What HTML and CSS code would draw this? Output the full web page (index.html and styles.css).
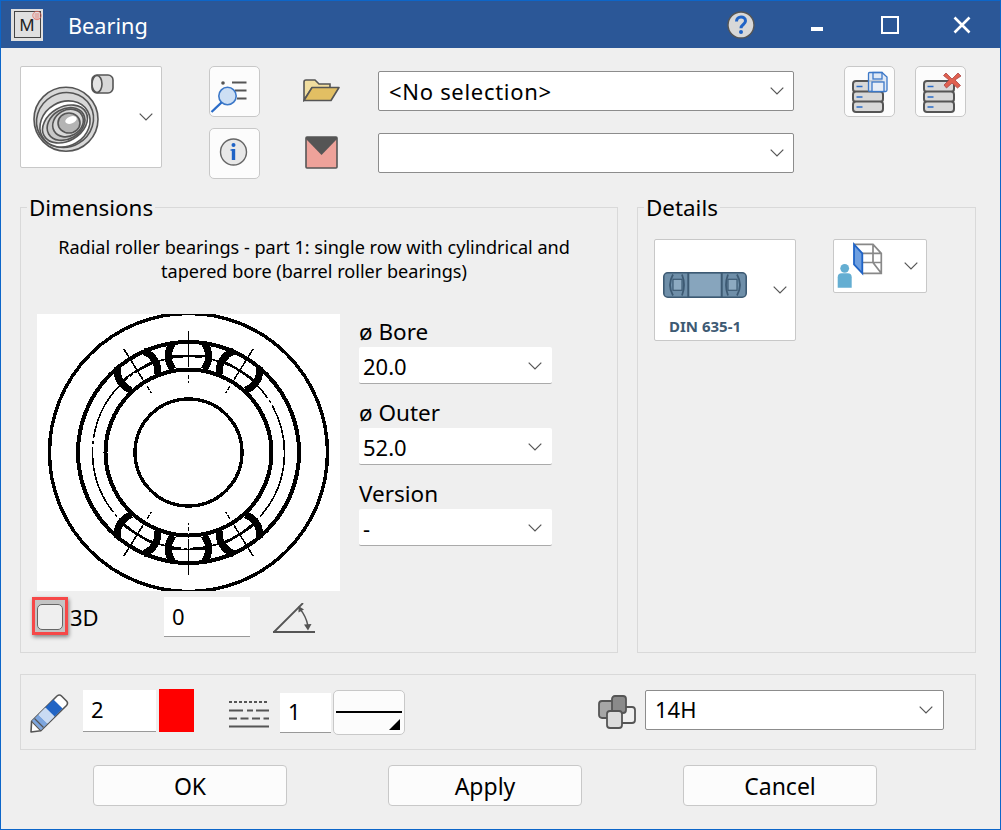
FILE: index.html
```html
<!DOCTYPE html>
<html lang="en">
<head>
<meta charset="utf-8">
<title>Bearing</title>
<link rel="stylesheet" href="styles.css">
</head>
<body>
<svg class="defs" width="0" height="0" aria-hidden="true">
  <defs>
    <symbol id="chev" viewBox="0 0 14 8"><path d="M.7.7 7 7 13.3.7" fill="none" stroke="#555" stroke-width="1.2"/></symbol>
    <symbol id="dbstack" viewBox="0 0 33 33">
      <g fill="#d8d8d8" stroke="#555" stroke-width="2">
        <rect x="1" y="1" width="30" height="11" rx="3"/>
        <rect x="1" y="11.500" width="30" height="10.500" rx="3"/>
        <rect x="1" y="21.500" width="30" height="10.500" rx="3"/>
      </g>
      <path d="M4.500 6.500h6M4.500 17h6M4.500 27h6" stroke="#2a6cc8" stroke-width="1.600"/>
    </symbol>
    <g id="roller" fill="none" stroke="#000">
      <path d="M-15.500-110Q-25-96-15.500-83M15.500-110Q25-96 15.500-83" stroke-width="7"/>
      <path d="M0-122V-86M0-84V-81M0-78V-74M0-72V-70" stroke-width="1.500"/>
      <path d="M-20-96Q0-98 20-96" stroke-width="1.500"/>
    </g>
  </defs>
</svg>
<div class="window">
  <header class="titlebar">
    <div class="app-icon"><span class="app-m">M</span><svg class="app-badge" width="10" height="11" viewBox="0 0 10 11"><circle cx="5" cy="5.500" r="4.200" fill="none" stroke="#e56b60" stroke-width=".8"/><path d="M2.500 4h5M2.500 6h5M2.500 8h5" stroke="#e56b60" stroke-width=".8"/></svg></div>
    <h1 class="title">Bearing</h1>
    <svg class="help" width="28" height="28" viewBox="0 0 28 28"><circle cx="14" cy="14" r="13" fill="#d8d8d8" stroke="#555" stroke-width="1.400"/><path d="M9.500 10.500C9.500 4.500 18.500 4.500 18.500 10C18.500 13.500 14 13.500 14 17.200" fill="none" stroke="#1f63c6" stroke-width="3"/><circle cx="14" cy="21" r="2" fill="#1f63c6"/></svg>
    <span class="win-min"></span>
    <span class="win-max"></span>
    <svg class="win-close" width="18" height="18" viewBox="0 0 18 18"><path d="M1.500 1.500 16.500 16.500M16.500 1.500 1.500 16.500" stroke="#fff" stroke-width="2.600"/></svg>
  </header>

  <main class="content">
    <section class="toolbar">
      <button class="bearing-pick">
        <svg width="90" height="90" viewBox="0 0 90 90">
          <g stroke="#555" stroke-width="1.600" fill="#d8d8d8">
            <rect x="60" y="1" width="21" height="18" rx="5"/>
            <ellipse cx="65" cy="10" rx="5" ry="8.500" fill="#e4e4e4"/>
            <circle cx="34" cy="45.300" r="32"/>
            <ellipse cx="33" cy="46" rx="29" ry="27" transform="rotate(-30 33 46)"/>
            <ellipse cx="33" cy="50" rx="26" ry="22" transform="rotate(-30 33 50)" fill="#fff"/>
            <ellipse cx="33" cy="50" rx="24" ry="17" transform="rotate(-30 33 50)"/>
            <ellipse cx="34" cy="50" rx="20" ry="15" transform="rotate(-30 34 50)" fill="#c8c8c8"/>
            <ellipse cx="36" cy="49" rx="16" ry="13" transform="rotate(-30 36 49)"/>
            <ellipse cx="37" cy="49" rx="11" ry="10" fill="#b4b4b4"/>
            <ellipse cx="39" cy="46" rx="6" ry="3.500" transform="rotate(-20 39 46)" fill="#fff" stroke="none"/>
          </g>
        </svg>
        <svg class="chev pick-chev" width="14" height="8"><use href="#chev"/></svg>
      </button>

      <div class="tool-col">
        <button class="icon-btn">
          <svg width="51" height="51" viewBox="0 0 51 51"><circle cx="14" cy="17" r="1.800" fill="#555"/><path d="M23 16.500H37.500M26 24.500H37.500M28 32.500H37.500" stroke="#555" stroke-width="2"/><circle cx="18.500" cy="30" r="8.700" fill="#cddff4" stroke="#3c78c8" stroke-width="1.600"/><path d="M12.500 36.500 2.500 46" stroke="#2a6cc8" stroke-width="2.400"/></svg>
        </button>
        <button class="icon-btn">
          <svg width="51" height="51" viewBox="0 0 51 51"><circle cx="24.500" cy="24" r="13" fill="#e8e8e8" stroke="#666" stroke-width="1.400"/><circle cx="24.500" cy="17" r="2" fill="#1f63c6"/><path d="M24.500 21V32" stroke="#1f63c6" stroke-width="3.400"/><path d="M21.500 22H25" stroke="#1f63c6" stroke-width="1.400"/></svg>
        </button>
      </div>

      <div class="marker-col">
        <svg width="37" height="23" viewBox="0 0 37 23"><path d="M1 21V3Q1 1 3 1H12L16 5H27V9H9L1 21Z" fill="#f0dd9f" stroke="#555" stroke-width="1.600"/><path d="M1 21.500 9 8.500H36L28 21.500Z" fill="#e2bf63" stroke="#555" stroke-width="1.600" stroke-linejoin="round"/></svg>
        <svg width="33" height="33" viewBox="0 0 33 33"><rect x="1" y="1" width="31" height="31" fill="#eea29a" stroke="#555" stroke-width="1.600" rx="1"/><path d="M1 1H32V3L16.500 19 1 3Z" fill="#555"/></svg>
      </div>

      <div class="combo-col">
        <div class="combo combo-main"><span>&lt;No selection&gt;</span><svg class="chev" width="14" height="8"><use href="#chev"/></svg></div>
        <div class="combo combo-main"><span></span><svg class="chev" width="14" height="8"><use href="#chev"/></svg></div>
      </div>

      <button class="icon-btn db-btn">
        <svg class="db-icon" width="51" height="51" viewBox="0 0 51 51"><use href="#dbstack" x="8" y="14" width="33" height="33"/><path d="M24.500 7.500Q24.500 6.500 25.500 6.500H38L43 11V24Q43 25.500 41.500 25.500H25.500Q24.500 25.500 24.500 24Z" fill="#d8e3f2" fill-opacity=".8" stroke="#3c78c8" stroke-width="1.300"/><rect x="29" y="6.500" width="9" height="6.500" fill="none" stroke="#3c78c8" stroke-width="1.300"/><rect x="28" y="16" width="12" height="9.500" fill="#e8eef7" stroke="#3c78c8" stroke-width="1.300"/></svg>
      </button>
      <button class="icon-btn">
        <svg width="51" height="51" viewBox="0 0 51 51"><use href="#dbstack" x="8" y="14" width="33" height="33"/><path d="M31 7 37 13 43 7 46 10 40 14 45.500 19.500 42.500 22 37 17 31.500 22 29 19 34 14 28.500 9.500Z" fill="#e0604f" stroke="#a44" stroke-width=".8"/></svg>
      </button>
    </section>

    <section class="panels">
      <fieldset class="panel panel-dim">
        <legend>Dimensions</legend>
        <p class="desc">Radial roller bearings - part 1: single row with cylindrical and<br>tapered bore (barrel roller bearings)</p>
        <div class="dim-main">
          <svg class="drawing" width="303" height="277" viewBox="0 0 303 277" shape-rendering="crispEdges">
            <rect width="303" height="277" fill="#fff"/>
            <g transform="translate(151.500 138.500)" fill="none" stroke="#000">
              <circle r="139" stroke-width="3.400"/>
              <circle r="110.500" stroke-width="4"/>
              <circle r="83" stroke-width="4"/>
              <circle r="53.500" stroke-width="3.400"/>
              <circle r="96" stroke-width="1.600" stroke-dasharray="70 3 3 3"/>
              <use href="#roller"/>
              <use href="#roller" transform="rotate(32)"/>
              <use href="#roller" transform="rotate(-32)"/>
              <use href="#roller" transform="rotate(180)"/>
              <use href="#roller" transform="rotate(148)"/>
              <use href="#roller" transform="rotate(-148)"/>
            </g>
          </svg>
          <div class="fields">
            <label class="field-label">ø Bore</label>
            <div class="combo combo-small"><span>20.0</span><svg class="chev" width="14" height="8"><use href="#chev"/></svg></div>
            <label class="field-label">ø Outer</label>
            <div class="combo combo-small"><span>52.0</span><svg class="chev" width="14" height="8"><use href="#chev"/></svg></div>
            <label class="field-label">Version</label>
            <div class="combo combo-small"><span>-</span><svg class="chev" width="14" height="8"><use href="#chev"/></svg></div>
          </div>
        </div>
        <div class="row-3d">
          <div class="check-hl"><span class="check"></span></div>
          <span class="label-3d">3D</span>
          <div class="input input-angle">0</div>
          <svg class="angle-icon" width="42" height="30" viewBox="0 0 42 30"><path d="M0 29H42M1 29 30 0" fill="none" stroke="#555" stroke-width="1.800"/><path d="M27 6Q33 13 35 23" fill="none" stroke="#555" stroke-width="1.400"/><path d="M25.500 3 31 6.500 25.500 9.500ZM35 27.500 31 21.500 38.500 21Z" fill="#555"/></svg>
        </div>
      </fieldset>

      <fieldset class="panel panel-details">
        <legend>Details</legend>
        <div class="details-row">
          <button class="din-btn">
            <svg width="84" height="26" viewBox="0 0 84 26"><rect x=".8" y=".8" width="82.400" height="24.400" rx="4" fill="#6f8fa9" stroke="#3d5a73" stroke-width="1.600"/><rect x="25" y="2" width="34" height="22" fill="#87a5bd"/><path d="M25.300 1V25M58.700 1V25" stroke="#3d5a73" stroke-width="2"/><rect x="10" y="7.300" width="9" height="11" fill="#8daac1" stroke="#3d5a73" stroke-width="1.200"/><rect x="65" y="7.300" width="9" height="11" fill="#8daac1" stroke="#3d5a73" stroke-width="1.200"/><path d="M10 2.500Q4 13 10 23.500M19 2.500Q23 13 19 23.500M65 2.500Q61 13 65 23.500M74 2.500Q80 13 74 23.500" fill="none" stroke="#3d5a73" stroke-width="1.800"/></svg>
            <svg class="chev din-chev" width="14" height="8"><use href="#chev"/></svg>
            <span class="din-label">DIN 635-1</span>
          </button>
          <button class="view-btn">
            <svg width="70" height="52" viewBox="0 0 70 52"><circle cx="10.700" cy="28.300" r="4.400" fill="#64aed2"/><path d="M3.700 47.700V37.300Q3.700 33.300 7.700 33.300H13.700Q17.700 33.300 17.700 37.300V47.700Z" fill="#64aed2"/><path d="M20 4.300H39L47.300 13.300V33.300H28.300M28.300 13.300H47.300M39 4.300V22.500M28.300 22.500H47.300L39 22.500 47.300 33.300" fill="none" stroke="#888" stroke-width="1.700"/><path d="M20 4.300 28.300 13.300V33.300L20 24.300Z" fill="#6e9fe0" stroke="#1f63c6" stroke-width="1.800"/></svg>
            <svg class="chev" width="14" height="8"><use href="#chev"/></svg>
          </button>
        </div>
      </fieldset>
    </section>

    <section class="props">
      <svg class="pencil" width="40" height="40" viewBox="0 0 40 40"><path d="M1 39 1.600 28.400 27 3Q29.500 1 31.500 3L36.500 8Q38.500 10 36.500 12.500L10.800 37.800Z" fill="#fff" stroke="#555" stroke-width="1.600" stroke-linejoin="round"/><path d="M1.800 28 8.400 21.400 17.600 30.600 10.800 37.200Z" fill="#7ca5de"/><path d="M8.400 21.400 15.400 14.400 24.600 23.600 17.600 30.600Z" fill="#c9dbf3"/><path d="M15.400 14.400 23.400 6.400 32.600 15.600 24.600 23.600Z" fill="#2164c4"/><path d="M1.600 28.400 10.800 37.800M4.500 25.500 13.500 34.500" stroke="#555" stroke-width="1.200"/></svg>
      <div class="input input-pen">2</div>
      <span class="swatch"></span>
      <svg class="linestyles" width="40" height="27" viewBox="0 0 40 27"><g stroke="#555" stroke-width="2"><path d="M0 1H40" stroke-dasharray="3 2"/><path d="M0 9.500H14M18 9.500H24M27 9.500H40"/><path d="M0 17.500H40" stroke-dasharray="8 3.500"/><path d="M0 25.500H40"/></g></svg>
      <div class="input input-line">1</div>
      <button class="line-btn"><span class="line-sample"></span><span class="corner"></span></button>
      <svg class="layers" width="38" height="34" viewBox="0 0 38 34"><rect x="14" y="12" width="23" height="16" rx="3" fill="#efefef" stroke="#555" stroke-width="1.800"/><rect x="1" y="6" width="20" height="17" rx="3" fill="#a6a6a6" stroke="#555" stroke-width="1.800"/><rect x="14" y="1" width="14" height="17" rx="3" fill="#8a8a8a" stroke="#555" stroke-width="1.800"/><rect x="9" y="16" width="15" height="17" rx="3" fill="#dcdcdc" stroke="#555" stroke-width="1.800"/></svg>
      <div class="combo combo-fit"><span>14H</span><svg class="chev" width="14" height="8"><use href="#chev"/></svg></div>
    </section>

    <section class="actions">
      <button class="action">OK</button>
      <button class="action">Apply</button>
      <button class="action">Cancel</button>
    </section>
  </main>
</div>
</body>
</html>
```

FILE: styles.css
```css
* { box-sizing: border-box; }
html, body { margin: 0; padding: 0; }
body { font-family: "Noto Sans", "Open Sans", sans-serif; color: #000; background: #efefef; overflow: hidden; }
.defs { position: absolute; }
svg { display: block; flex: none; }
button { font-family: inherit; padding: 0; margin: 0; color: inherit; }

.window { width: 1001px; height: 830px; border: 1px solid #0d66c9; background: #efefef; display: flex; flex-direction: column; }

.titlebar { height: 47px; background: #2b5797; display: flex; align-items: center; flex: none; }
.app-icon { position: relative; width: 32px; height: 32px; margin-left: 10px; background: #e0e0e0; display: flex; align-items: center; justify-content: center; }
.app-m { width: 27px; height: 27px; border: 1px solid #444; font-size: 17px; line-height: 25px; text-align: center; color: #222; }
.app-badge { position: absolute; right: 1px; top: 1px; }
.title { margin: 2px 0 0 25px; font-size: 21.700px; font-weight: 400; color: #fff; width: 660px; white-space: nowrap; }
.help { margin-left: -1px; }
.win-min { width: 12px; height: 4px; background: #fff; margin: 8px 0 0 56px; }
.win-max { width: 18px; height: 18px; border: 2.500px solid #fff; margin-left: 58px; }
.win-close { margin-left: 54px; }

.content { flex: 1; display: flex; flex-direction: column; padding: 18px 24px 0 19px; }

.toolbar { display: flex; height: 113px; flex: none; }
.bearing-pick { width: 142px; height: 102px; background: #fff; border: 1px solid #c8c8c8; border-radius: 2px; position: relative; padding: 7px 0 0 11px; display: flex; align-items: flex-start; }
.pick-chev { position: absolute; left: 118px; top: 46px; }
.tool-col { margin-left: 47px; display: flex; flex-direction: column; gap: 11px; }
.icon-btn { width: 51px; height: 51px; background: #fcfcfc; border: 1px solid #c8c8c8; border-radius: 5px; position: relative; display: block; flex: none; margin-left: 20px; }
.tool-col .icon-btn { margin-left: 0; }
.icon-btn svg { position: absolute; left: -1px; top: -1px; }
.db-btn { margin-left: 50px; }
.marker-col { margin-left: 43px; width: 37px; display: flex; flex-direction: column; align-items: center; padding-top: 13px; gap: 34px; }
.combo-col { margin-left: 38px; width: 416px; display: flex; flex-direction: column; padding-top: 5px; gap: 22px; }

.combo { background: #fff; border: 1px solid #8c8c8c; border-radius: 2px; display: flex; align-items: center; justify-content: space-between; font-size: 22px; }
.combo-main { height: 40px; padding: 0 9px 0 10px; letter-spacing: .7px; }
.combo-small { height: 37px; border: 0; border-bottom: 1px solid #aaa; padding: 1px 10px 0 4px; margin-top: 3px; margin-bottom: 17px; }
.combo-fit { width: 299px; height: 40px; padding: 0 10px 2px 9px; margin-bottom: 5px; }
.combo-fit .chev { margin-top: 2px; }

.panels { display: flex; gap: 19px; margin-top: 17px; height: 457px; flex: none; }
.panel { margin: 0; padding: 0; border: 1px solid #d9d9d9; min-width: 0; }
.panel legend { margin-left: 6px; padding: 0 2px; font-size: 22.400px; line-height: 23px; }
.panel-dim { width: 598px; }
.panel-details { width: 339px; }
.desc { margin: 16px 0 0; padding-right: 10px; text-align: center; font-size: 18.100px; line-height: 24px; }
.dim-main { display: flex; margin: 31px 0 0 16px; gap: 19px; }
.fields { width: 193px; padding-top: 6px; }
.field-label { display: block; font-size: 22.500px; line-height: 24px; }
.row-3d { display: flex; align-items: flex-start; margin: 6px 0 0 11px; }
.check-hl { width: 36px; height: 38px; border: 3px solid #f64848; background: #c4c4c4; box-shadow: 1px 2px 4px rgba(0,0,0,.45); padding: 4px 2px; flex: none; }
.check { display: block; width: 26px; height: 26px; border: 1px solid #666; border-radius: 5px; background: #efefef; }
.label-3d { margin: 6px 0 0 2px; font-size: 22px; line-height: 28px; width: 94px; }
.input { background: #fff; border-bottom: 1px solid #999; font-size: 22px; display: flex; align-items: center; padding: 0 0 3px 8px; flex: none; }
.input-angle { width: 86px; height: 40px; padding-bottom: 2px; }
.angle-icon { margin: 6px 0 0 23px; }

.details-row { display: flex; align-items: flex-start; margin: 20px 0 0 16px; gap: 37px; }
.din-btn { position: relative; width: 142px; height: 102px; background: #fff; border: 1px solid #c8c8c8; border-radius: 2px; }
.din-btn > svg:first-child { position: absolute; left: 8px; top: 32px; }
.din-chev { position: absolute; left: 118px; top: 46px; }
.din-label { position: absolute; left: 14px; top: 76px; font-size: 15px; line-height: 20px; font-weight: 700; color: #3d5a73; white-space: nowrap; }
.view-btn { width: 94px; height: 54px; background: #fff; border: 1px solid #c8c8c8; border-radius: 2px; display: flex; align-items: center; justify-content: space-between; padding: 0 10px 0 0; }

.props { display: flex; align-items: center; margin-top: 21px; height: 76px; flex: none; border: 1px solid #d9d9d9; padding: 0 31px 0 9px; }
.pencil { margin-top: 1px; }
.input-pen { width: 73px; height: 42px; margin: 0 0 2px 13px; }
.swatch { width: 35px; height: 43px; margin: 0 0 3px 3px; background: #f00; flex: none; }
.linestyles { margin: 4px 0 0 35px; }
.input-line { width: 51px; height: 40px; margin: 1px 0 0 11px; }
.line-btn { width: 72px; height: 45px; margin: 1px 0 0 2px; position: relative; background: #fcfcfc; border: 1px solid #c8c8c8; border-radius: 5px; }
.line-sample { position: absolute; left: 2px; right: 2px; top: 20px; height: 2px; background: #000; }
.corner { position: absolute; right: 4px; bottom: 4px; width: 0; height: 0; border-left: 11px solid transparent; border-bottom: 11px solid #000; }
.layers { margin-left: auto; }
.combo-fit { margin-left: 9px; }

.actions { display: flex; gap: 101px; margin-top: 15px; padding-left: 73px; }
.action { width: 194px; height: 41px; background: #fcfcfc; border: 1px solid #c8c8c8; border-radius: 4px; font-size: 23px; }
```
